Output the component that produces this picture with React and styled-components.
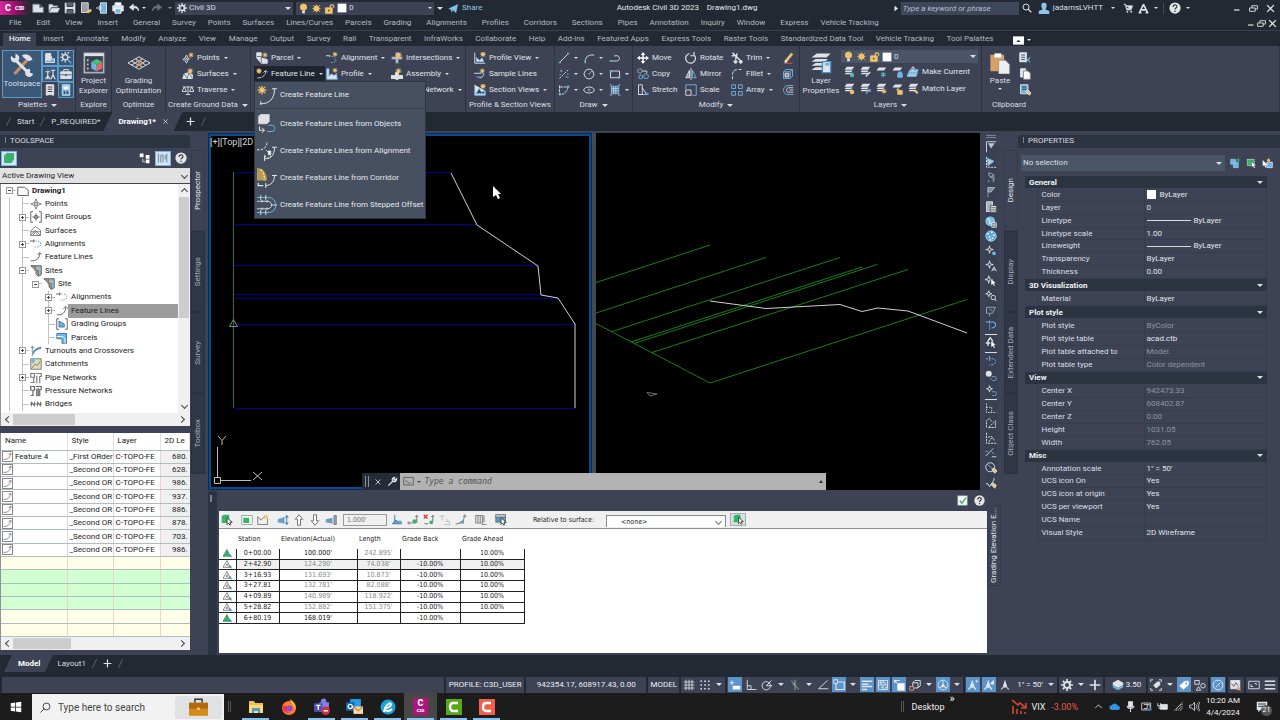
import React from 'react'
import styled, { createGlobalStyle } from 'styled-components'

const dark = '#222933'
const panel = '#3d4355'
const W = '#dfe3e8'
const B = '#6fb4e4'
const Y = '#f0c36a'
const G = '#35b56a'

const GlobalStyle = createGlobalStyle`
  * { box-sizing: border-box; }
  body {
    margin: 0;
    background: ${dark};
    color: #dcdfe6;
    font: 8px/12px Roboto, 'Open Sans', sans-serif;
  }
  button, input, select {
    font: inherit;
    color: inherit;
    border: 0;
    margin: 0;
    padding: 0;
    background: none;
    border-radius: 0;
    outline: 0;
  }
  select { appearance: none; }
  ul { list-style: none; margin: 0; padding: 0; }
  a { color: inherit; text-decoration: none; }
  table { border-collapse: collapse; }
`

/* ---------- icons ---------- */

const sun = (x = 4, y = 4, r = 2) => (
  <g stroke={Y} strokeWidth="1">
    <circle cx={x} cy={y} r={r} fill={Y} />
    <path d={`M${x} ${y - r - 2}v${r * 2 + 4}M${x - r - 2} ${y}h${r * 2 + 4}M${x - r - 1} ${y - r - 1}l${r * 2 + 2} ${r * 2 + 2}M${x + r + 1} ${y - r - 1}l-${r * 2 + 2} ${r * 2 + 2}`} />
  </g>
)
const pointer = <path d="M8 5v9l2-2 2 3 1.5-1-1.5-3h3z" fill="#fff" stroke="#333" strokeWidth=".6" />
const layerStack = (
  <path d="M5 1h10l-3 4H2zM4 6h9l-2 2H2zM4 9h9l-2 2H2z" fill={W} stroke="none" />
)

const icons = {
  newFile: <path d="M1 3h9l5 4v7H1zM10 3v4h5" fill={W} stroke="#7c828c" />,
  open: <path d="M1 13V3h5l1 2h6v2H5zM5 8h11l-3 6H1z" fill={W} stroke="#7c828c" strokeWidth=".6" />,
  save: <><path d="M1 1h14v14H1z" fill={W} stroke="none" /><path d="M4 1v5h8V1M4 15v-5h8v5" fill="#5d636d" stroke="#333" /></>,
  saveAs: <><path d="M2 1h9v13H2z" fill="#9a9fa7" stroke={W} /><path d="M7 14l7-5 2 3-5 3z" fill={Y} stroke="none" /></>,
  mobile: <><path d="M6 1h8v14H6z" fill={B} stroke={W} /><path d="M0 8h7M4 5l3 3-3 3" strokeWidth="1.6" /></>,
  print: <><path d="M4 1h8v4H4z" fill="#fff" /><path d="M1 5h14v7H1z" fill={W} /><path d="M4 9h8v6H4z" fill={B} stroke="#fff" /></>,
  undo: <path d="M7 3L2 7l5 4V8c4-1 6 1 7 4 0-5-3-7-7-6z" fill={W} />,
  redo: <path d="M9 3l5 4-5 4V8c-4-1-6 1-7 4 0-5 3-7 7-6z" fill="#68707e" stroke="#68707e" />,
  gear: <><circle cx="8" cy="8" r="4" strokeWidth="2.6" /><path d="M8 0v3M8 13v3M0 8h3M13 8h3M2.5 2.5l2 2M11.5 11.5l2 2M13.5 2.5l-2 2M4.5 11.5l-2 2" strokeWidth="2.2" /></>,
  bulb: <><circle cx="8" cy="6" r="4.6" fill={Y} stroke={Y} /><path d="M6 11h4v4H6z" fill={W} stroke="none" /></>,
  sun: sun(8, 8, 4),
  lock: <><path d="M2 7h10v8H2z" fill={Y} stroke={Y} /><path d="M9 7V4a3 3 0 015 0v3" stroke={Y} strokeWidth="1.8" /><circle cx="7" cy="11" r="1.2" fill="#333" stroke="none" /></>,
  square: <path d="M1 1h14v14H1z" fill="#fff" stroke="none" />,
  send: <path d="M0 8l15-7-3 14-5-4-2 4-1-5z" fill="#7cc2ee" stroke={dark} strokeWidth=".6" />,
  search: <><circle cx="6.5" cy="6.5" r="4.8" strokeWidth="1.6" /><path d="M10 10l5 5" strokeWidth="2" /></>,
  user: <path d="M8 1a3.5 3.5 0 013.5 4c0 2-1 4-2 4.5L15 12v4H1v-4l5.5-2.500C5 9 4.500 7 4.500 5A3.500 3.500 0 018 1z" fill="#8ec6ec" stroke="none" />,
  cart: <><path d="M1 2h3l2 9h8M4.5 4.5H15L14 9H5.5z" fill={W} /><circle cx="7" cy="14" r="1" fill={W} /><circle cx="13" cy="14" r="1" fill={W} /></>,
  adsk: <path d="M8 2L2 14M8 2l6 12M5 10h6M1 14h4M11 14h4" strokeWidth="2.2" />,
  help: <><circle cx="8" cy="8" r="7.5" fill="#e3e4e6" stroke="none" /><path d="M5.500 6.500c0-4 5.500-3.500 5 0-.3 1.500-2.500 1.500-2.500 3.500M8 11.500v1.800" stroke="#333" strokeWidth="1.6" /></>,
  min: <path d="M2 12h11" strokeWidth="2.4" />,
  restore: <path d="M1 7h10v6H1zM5 7V3h10v6h-4" strokeWidth="1.6" />,
  close: <path d="M2 2l12 12M14 2L2 14" strokeWidth="2.2" />,
  play: <path d="M5 4l5 4-5 4z" fill={W} />,
  plus: <path d="M8 1v14M1 8h14" strokeWidth="2.2" />,
  closeThin: <path d="M3 3l10 10M13 3L3 13" strokeWidth="1.6" />,
  ribbonToggle: <><path d="M0 2h20v12H0z" fill="#fff" stroke="none" /><path d="M5 10l3-3 3 3z" fill="#333" stroke="none" /></>,

  tools: <><path d="M3 14l9-10" stroke="#cf9060" strokeWidth="2" /><path d="M8 1.500c3-1.500 6 0 7 3l-2.500 1L9 3z" fill={W} stroke="none" /><path d="M3 4l10 10" strokeWidth="2" /><path d="M1 2.500a2.500 2.500 0 103-1.500L4 3.500 2.500 4zM13 11a2.300 2.300 0 102 3l-2-.5z" fill={W} stroke={W} strokeWidth=".7" /></>,
  chartPal: <><path d="M2 2v12h12V9h-4V6H8v5" fill="#8ea8c4" /><path d="M3 2h6v9H3z" fill={W} /></>,
  gearPal: <><circle cx="7" cy="7" r="3.5" strokeWidth="1.8" /><path d="M7 0v3M7 11v3M0 7h3M11 7h3M2 2l2 2M10 2l2-2M2 12l2-2" strokeWidth="1.6" /><path d="M10 10l5 5" stroke={B} strokeWidth="1.6" /></>,
  tripod: <path d="M5 5v5l-3 5M5 10l3 5M5 10v5M2 5h6M9 3h6M12 3v6l-3 6M12 9l3 6M5 2v1" strokeWidth="1.5" />,
  toolbox: <><path d="M1 5h14v9H1z" fill={W} /><path d="M5 5V2h6v3" /><path d="M1 9h14" stroke="#4c5566" /><path d="M7 8h2v3H7z" fill="#4c5566" stroke="none" /></>,
  note: <><path d="M3 1h10v14l-5-1-5 1z" fill={W} /><path d="M5 4h6M5 7h6M5 10h6" stroke="#333" /></>,
  calc: <><path d="M3 1h10v14H3z" fill={B} /><path d="M5 3h6v4H5z" fill="#fff" /><path d="M5 10h2v3H5zM9 10h2v3H9z" fill="#335" stroke="none" /></>,
  projectExplorer: <><path d="M1 1h14v14H1z" fill="#3a414d" stroke="#aab0b8" /><path d="M1 1h14v2H1z" fill={W} stroke="none" /><path d="M3 6h1M3 9h1M3 12h1" strokeWidth="1.4" /><path d="M6 7l4 2v5l-4-2z" fill={B} stroke="none" /><path d="M10 9l4-2v5l-4 2z" fill="#e06a5f" stroke="none" /><path d="M6 7l4-2 4 2-4 2z" fill="#43c07a" stroke="none" /></>,
  optimization: <><path d="M0 8l8-4.500L16 8l-8 4.500zM2.500 9.500L10.500 5M5.500 11L13 6.500M2.500 6.500L10.500 11M5.500 5L13 9.500" strokeWidth=".7" /><circle cx="8" cy="8" r="2" stroke="#d98c4f" strokeWidth=".8" /><circle cx="8" cy="8" r=".8" fill={B} stroke="none" /></>,
  points: <><path d="M6 4l2 4 2 1-2 2-2 4-2-4-3-1 3-2z" /><circle cx="6" cy="9.500" r="1.200" />{sun(12, 4, 1.5)}</>,
  surfaces: <><path d="M1 14l2-6 6-2 5 3v5z" fill={W} /><path d="M3 8l4 6 2-8 5 8" stroke="#6a717e" />{sun(11, 4, 2)}</>,
  traverse: <path d="M8 3v11M5 14h6M1 4h14M3 4L0 10h6zM13 4l-3 6h6z" />,
  parcel: <><path d="M1 1h6v7l8 2v5H7L1 8z" fill={W} /><path d="M7 5v10M1 6h7" stroke="#6a717e" />{sun(12, 4, 1.5)}</>,
  featureLine: <><path d="M2 13c6 1 11-3 11-9M10 6l3-3 3 3" strokeDasharray="5 1" />{sun(4, 4, 2)}</>,
  alignment: <><path d="M0 5h6" /><path d="M4 6h4c5 0 8 8 1 8H5" stroke={B} strokeDasharray="2 1.5" />{sun(12, 3, 1.5)}</>,
  profile: <><path d="M1 1v14h14l-1-8-3 3-4-2-3 3V1z" fill={W} stroke={B} />{sun(12, 3, 1.5)}</>,
  intersections: <><path d="M6 1h4v5h5v4h-5v5H6v-5H1V6h5z" fill="#b9bec6" stroke="#5f6673" />{sun(10, 4, 2.5)}</>,
  assembly: <><path d="M0 10h6v4H0zM10 10h6v4h-6zM6 6h4v9H6z" fill={W} />{sun(10, 4, 2)}</>,
  pipe: <><path d="M1 3h6v10H1zM9 8h6v5H9zM7 9h2" fill={W} />{sun(12, 4, 1.5)}</>,
  profileView: <><path d="M1 1v14h14" /><path d="M3 13V7l4 4 4-3 2 5z" fill={W} stroke={B} />{sun(12, 3, 2)}</>,
  sampleLines: <><path d="M0 7h10M7 13c3 1 6-2 6-6" /><path d="M3 12h8" stroke={B} />{sun(11, 4, 1.5)}</>,
  sectionViews: <><path d="M1 1v14h14V9M3 12l4-6 3 5 4-2v4H3z" fill={W} stroke={B} />{sun(12, 3, 2)}</>,
  line: <><path d="M3 13L13 3" /><path d="M1 13h3v2H1zM12 1h3v2h-3z" fill={B} stroke="none" /></>,
  arc: <><path d="M3 14C2 8 7 3 14 4" /><path d="M2 13h2v2H2zM13 3h2v2h-2zM5 5h2v2H5z" fill={B} stroke="none" /></>,
  pline: <><path d="M2 12h8c5 0 5-6 1-7H8" /><path d="M1 11h2v2H1zM7 4h2v2H7z" fill={B} stroke="none" /></>,
  divide: <><path d="M2 14L14 2" strokeDasharray="3 1.5" /><path d="M3 4h3M4.500 2.500v3M10 12h4M2 9h2M12 8h2" stroke={B} /></>,
  circle: <><circle cx="8" cy="8" r="6.500" /><path d="M8 8l4-4M7 8h2M11 4h2v2" stroke={B} /></>,
  rect: <><path d="M2 4h12v9H2z" /><path d="M1 3h3v3H1zM12 11h3v3h-3z" fill={B} stroke="none" /></>,
  spline: <><path d="M2 2v12c5 1 11-4 11-10H2" strokeDasharray="4 1" /><path d="M1 12h3v3H1zM12 2h3v3h-3z" fill={B} stroke="none" /></>,
  ellipse: <><ellipse cx="8" cy="8" rx="7" ry="4" /><path d="M8 6v4M6 8h4" stroke={B} /></>,
  hatch: <><path d="M3 3h10v10H3z" fill="#4f86ad" stroke={B} /><path d="M3 6h10M3 9h10M6 3v10M9 3v10M1 1h2v2M15 1h-2v2M1 15h2v-2M15 15h-2v-2" strokeWidth=".8" /></>,
  move: <path d="M8 0l3 4H9v3h3V5l4 3-4 3V9H9v3h2l-3 4-3-4h2V9H4v2L0 8l4-3v2h3V4H5z" fill="#fff" stroke="none" />,
  copy: <><circle cx="4" cy="4" r="3" strokeDasharray="2 1" /><circle cx="5" cy="12" r="2.600" stroke={B} /><circle cx="12" cy="11" r="3.200" stroke={B} /><path d="M8 4h5v3" /></>,
  stretch: <><path d="M2 1h5v13H2zM7 5l6 9H2" stroke={W} /><path d="M9 14h6M13 11l3 3" stroke={B} /></>,
  rotate: <path d="M6 2a6.500 6.500 0 107 3M12 0v5h-5" strokeWidth="1.6" />,
  mirror: <><path d="M6 3v10H1z" fill="#8b95a3" /><path d="M10 3v10h5z" stroke={B} /><path d="M8 0v16" /></>,
  scale: <><path d="M1 7V1h14v14H9" stroke={B} /><path d="M1 8h7v7H1z" /></>,
  trim: <><path d="M2 1l10 10M8 2L6 10M1 5h4" strokeWidth="2" /><circle cx="6" cy="13" r="2" fill={W} /><circle cx="13" cy="13" r="2" fill={W} /></>,
  fillet: <><path d="M2 15V9c0-4 3-7 7-7h6" strokeDasharray="4 2" /><path d="M2 8c0-3 2-6 6-6" stroke={B} /></>,
  array: <path d="M1 1h5v5H1zM10 1h5v5h-5zM1 10h5v5H1zM10 10h5v5h-5z" stroke={B} />,
  erase: <><path d="M2 15h12" stroke="#d95f57" /><path d="M4 11l8-10 3 2-8 10z" fill={Y} stroke="none" /><path d="M4 11l3 2-3 1z" fill="#fff" /></>,
  explode: <><path d="M2 5h9v9H2zM2 5l3-3h9v9l-3 3M11 5l3-3" stroke={B} /><path d="M4 7h5v5H4z" fill="#8b95a3" /></>,
  offset: <><path d="M15 2H8C0 2 0 14 8 14h7" stroke={B} /><path d="M15 5H9c-4 0-4 6 0 6h6M15 8h-5" /></>,
  layerProps: <><path d="M5 1h10l-3 3H1zM4 5h9l-2 2H1zM4 8h9l-2 2H1zM4 11h8l-2 2H1z" fill={W} stroke="none" /><path d="M9 7h6v8H9z" fill={W} stroke="#4a90c4" strokeWidth="1" /><path d="M11 8h3v2h-3z" fill={B} stroke="none" /></>,
  layOff: <>{layerStack}<circle cx="12" cy="12" r="3" fill="#49b9c0" stroke="none" /></>,
  layIso: <>{layerStack}<path d="M9 14l6-6" strokeWidth="1.6" /></>,
  layFrz: <><path d="M5 2h10l-3 4H2z" fill={W} stroke="none" /><path d="M11 8v7M8 10l6 3M14 10l-6 3" stroke="#49b9c0" strokeWidth="1.6" /></>,
  layLock: <><path d="M5 2h10l-3 4H2z" fill={W} stroke="none" /><path d="M9 10h6v5H9zM10 10V8h4v2" fill={B} stroke={B} /></>,
  layOn: <>{layerStack}<circle cx="12" cy="12" r="3" fill={Y} stroke="none" /></>,
  layUniso: <>{layerStack}<path d="M9 14l6-5M12 9h3v3" stroke={B} strokeWidth="1.4" /></>,
  layThaw: <>{layerStack}{sun(12, 11, 1.5)}</>,
  layUnlock: <><path d="M5 2h10l-3 4H2z" fill={W} stroke="none" /><path d="M9 10h6v5H9zM8 10V8h3" fill={Y} stroke={Y} /></>,
  makeCurrent: <><path d="M2 9h12l-2 5H0zM4 5h11l-2 4H2z" fill="#a9c7dd" stroke={B} /><path d="M8 7V1M5 4l3-3 3 3" /></>,
  matchLayer: <>{layerStack}<path d="M9 11l5 4 1-3-4-3z" fill={Y} stroke="none" /></>,
  paste: <><path d="M1 2h10v12H1z" fill="#d9a066" stroke="none" /><path d="M4 1h5v3H4z" fill="#fff" stroke="none" /><path d="M7 6h5l3 3v7H7z" fill="#eceef0" stroke="#888" strokeWidth=".5" /></>,
  cut: <><path d="M1 1h9v12H1z" fill={W} /><path d="M3 4h5M3 7h5M3 10h5" stroke="#444" /><path d="M9 7l6 7M15 7l-6 7" stroke={B} strokeWidth="1.4" /></>,
  copyClip: <><path d="M2 1h7v11H2z" fill={W} /><path d="M6 4h6l3 3v8H6z" fill="#fff" stroke="#888" /></>,
  matchProp: <><path d="M2 1h10v12H2z" fill={B} stroke={W} /><path d="M4 4h6M4 7h6" stroke="#333" /><path d="M9 10l5 5 2-3-4-4z" fill={Y} stroke={W} /></>,

  bigFeature: <><path d="M3 15c7 0 11-4 11-12M12 3h4M3 13v3" strokeWidth=".8" />{sun(4, 4, 1.5)}</>,
  bigObjects: <><path d="M1 2l2-2h7v6l-2 2H1z" fill={W} stroke="#aaa" strokeWidth=".5" /><path d="M2 10v3h4M4 11l2 2-2 2" strokeWidth=".8" /><path d="M8 14h4c3 0 3-5 0-5H9" stroke={B} strokeWidth=".8" /></>,
  bigAlign: <><path d="M0 7h3c5-1 5-6 5-6M6 11c2 4 4 3 5 1" strokeDasharray="2 1" strokeWidth=".8" /><path d="M7 7l3 3M9 8h2v3H9z" fill="#fff" strokeWidth=".6" /><path d="M6 14c5 1 8-3 8-9M12 5h4M6 12v4" strokeWidth=".8" /></>,
  bigCorridor: <><path d="M0 0c5 0 8 4 8 10H0z" fill="#b59a5e" stroke="none" /><path d="M3 1c2 2 3 5 3 9" stroke="#f7e36b" strokeDasharray="2 1" /><path d="M1 12v2h4" strokeWidth="1" /><path d="M7 14c4 0 7-3 7-8M12 6h4M7 12v4" strokeWidth=".8" /></>,
  bigStepped: <><path d="M0 2h9c8 0 8 12 0 12H0" stroke={B} strokeWidth=".8" /><path d="M0 5h8c5 0 5 6 0 6H0M3 0v4M7 0v4M3 12v4M7 12v4M4 4v2M8 4v2M4 10v2M8 10v2M11 8h5" strokeWidth=".7" /></>,

  cubeGreen: <path d="M2 5l3-3h9v8l-3 4H2z" fill={G} stroke="#2b8a52" strokeWidth=".8" />,
  panorama: <><path d="M1 2h5v5H1zM9 4h5v5H9zM9 10h5v5H9z" fill="#fff" stroke="none" /><path d="M5 9v4h3" /></>,
  previewOn: <path d="M2 2v12M5 4v10M8 4v10M11 4v6M13 2v12M5 4h4" stroke="#8792a0" strokeWidth="1.6" />,
  page: <path d="M1 3h9l5 4v7H1z" stroke="#555" fill="#fff" />,
  tPoint: <><path d="M8 1l2 5 5 2-5 2-2 5-2-5-5-2 5-2z" stroke="#777" /><circle cx="8" cy="8" r="2" stroke="#666" /></>,
  tGroup: <><path d="M4 1H1v14h3M12 1h3v14h-3" stroke="#555" /><path d="M8 3v10M3 8h10" stroke="#777" /><circle cx="8" cy="8" r="2.500" stroke="#555" /></>,
  tSurface: <path d="M1 14V8l6-6 7 5v7zM1 14l6-7 7 7M1 9h13M4 14l3-4 4 4" stroke="#777" />,
  tAlign: <><path d="M0 4h6M5 2v4" stroke="#555" /><path d="M7 4h2c7 0 7 8 0 8H6" stroke={B} strokeDasharray="2 1.5" strokeWidth="1.5" /></>,
  tFeature: <path d="M1 13c7 1 12-3 12-10M10 5l3-3 3 3" stroke="#555" />,
  tSite: <><path d="M1 1h14v12l-4 2-3-3V7z" fill="#9ab9cf" stroke="#555" /><path d="M3 1h4v6l4 1v7" fill="none" stroke="#8a7a5a" strokeWidth="2" /></>,
  tGrading: <><path d="M4 1H1v14h3M12 1h3v14h-3" stroke="#555" /><path d="M4 4l7 4v4H4z" fill={B} stroke="#2f78a8" /></>,
  tParcel: <><path d="M1 2h13v13H8V9H1z" fill={B} stroke="#2f78a8" /><path d="M1 6h8l3 3v6" stroke="#fff" /></>,
  tTurnout: <><path d="M3 15C3 8 7 4 15 3M3 1v8M1 3h5" stroke="#777" /><path d="M4 12C5 7 9 5 15 4" stroke="#3c8fd0" strokeWidth="2" /></>,
  tCatch: <><path d="M1 1h14v14H1z" fill="#cfe3c0" stroke="#777" /><path d="M2 14l5-6 3 2 4-6" stroke="#d2553d" /><circle cx="4" cy="4" r="2.500" fill={B} stroke="none" /></>,
  tPipe: <path d="M1 2h5v5H1zM5 7v7H1M8 2h7v4h-2v9M9 5v10M1 14h5" stroke="#777" strokeWidth="1.5" />,
  tPressure: <path d="M1 2h5v5H1zM4 7v7H1M8 2h7v4h-2v9M9 5v10M11 4v11" stroke="#666" strokeWidth="1.6" />,
  tBridge: <path d="M0 8h16M2 5v6M6 5v6M10 5v6M14 5v6M2 5l4 6M10 5l4 6" stroke="#666" />,

  addSel: <><path d="M1 2h7v7H1zM5 6h7v8H5z" fill={B} stroke="#8cc4ea" /><path d="M12 0v6M9 3h6" stroke={G} strokeWidth="1.6" /></>,
  quickSel: <><path d="M2 2h10v9H2z" fill={G} stroke={W} strokeDasharray="2 1" />{pointer}</>,
  selObj: <><path d="M7 6h8v8H7z" fill={B} stroke={W} /><path d="M7 3l3-3 2 4-3 2z" fill={Y} stroke="none" /><path d="M1 3v9l2-2 2 4 1-1-1-3h3z" fill="#fff" stroke="none" /></>,

  eSelect: <><path d="M1 3l3-2h7v8l-2 3H1z" fill={G} stroke="none" /><path d="M8 5v9l2-2 2 3 1-1-1-3h3z" fill="#fff" stroke="#333" /></>,
  eZoom: <><path d="M1 2h14v12H1z" fill="#fff" stroke="#8a9" /><path d="M3 5h8v7H3z" fill={G} stroke="none" /></>,
  eQuick: <><path d="M1 3v11h13V6M1 4l4 4 6-5" stroke="#777" />{sun(12, 4, 1.5)}</>,
  eRaise: <><path d="M1 7l9-3v9l-9-2z" fill="#6ba0c6" stroke="none" /><path d="M13 2v12M11 5l2-3 2 3M11 11l2 3 2-3" stroke="#2d78b0" /></>,
  eUp: <path d="M8 1l5 6h-3v8H6V7H3z" stroke="#666" fill="#fff" />,
  eDown: <path d="M8 15l5-6h-3V1H6v8H3z" stroke="#666" fill="#fff" />,
  eSet: <><path d="M1 7l9-2v8l-9-2z" fill="#6ba0c6" stroke="none" /><path d="M12 2h3v12h-3z" fill="#9aa" stroke="#777" /></>,
  eFlat: <><path d="M5 1v8M2 13l4-5 8 5z" fill="#6ba0c6" stroke="#2d78b0" /><circle cx="12" cy="11" r="2.500" fill="#5f9fd0" stroke="none" /></>,
  eIns: <><path d="M1 12h6M3 10l-2 2 2 2M13 2v10M11 4l2-2 2 2" stroke="#666" /><circle cx="10" cy="10" r="3" fill={G} stroke="none" /></>,
  eDel: <><path d="M1 1l5 5M6 1L1 6" stroke="#d33" strokeWidth="1.8" /><path d="M2 13h5M13 2v8M11 4l2-2 2 2" stroke="#666" /><circle cx="11" cy="11" r="2.500" fill={G} stroke="none" /></>,
  eGray: <path d="M1 3h6M4 1v8M9 6l5 5M7 14h8M8 10h6v4" stroke="#c0c0c0" />,
  eCopy: <><path d="M1 13c6 1 10-3 12-10" stroke="#666" /><path d="M4 12l8-5v6z" fill="#6ba0c6" stroke="none" /><path d="M11 4l2-3 2 3" stroke="#666" /></>,
  eCols: <path d="M1 2h9v10H1zM4 2v10M7 2v10M12 2v9M9 14h6" stroke="#888" strokeWidth="1.5" />,
  eRows: <><path d="M1 1h13v10H1z" fill="#4e9bd0" stroke="#777" /><path d="M1 1h13v3H1z" fill="#ddd" stroke="#777" /><path d="M8 5v9l2-2 2 3 1-1-1-3h3z" fill="#fff" stroke="#333" /></>,
  triOn: <><path d="M0 13L7 1l6 12z" fill={G} stroke="#2b8a52" /><path d="M10 12h5M12 9l3 6" stroke="#2d88cc" strokeWidth="1.6" /></>,
  triOff: <><path d="M0 13L7 1l6 12z" fill="#fff" stroke="#555" /><path d="M7 6v5M5 9h4" stroke="#555" /><path d="M10 12h5M12 9l3 6" stroke="#2d88cc" strokeWidth="1.6" /></>,
  check: <><path d="M1 1h14v14H1z" fill="#fff" stroke="#888" /><path d="M4 8l3 4 6-8" stroke={G} strokeWidth="2" /></>,
  wrench: <path d="M2 14l7-7M14 4l-3 2-1-1 1-3c-3 0-4 3-3 5l1 1c3 1 5-1 5-4z" strokeWidth="1.8" />,
  cmd: <><path d="M1 2h14v11H1z" stroke="#555" /><path d="M4 6l2 2-2 2M7 10h4" stroke="#555" /></>,

  v1: <><path d="M2 1h13M2 1v14" /><path d="M4 3h9l-5 7z" fill="#b7c9d8" stroke="none" /></>,
  v2: <><path d="M2 1v14h13" strokeDasharray="3 1" /><path d="M3 3l9 4-8 6z" fill="#b7c9d8" stroke={B} /></>,
  v3: <path d="M5 2l5 2v4l-5-2zM6 8l5 2v5M12 4v9M5 12v3" stroke="#9aa8b8" />,
  v4: <><path d="M4 1v14" stroke="#8fa4b4" /><path d="M4 2h9l-5 6H4z" fill="#7d8b9d" stroke="#a9b6c4" /></>,
  v5: <><path d="M2 1h8v13H2z" fill="#aab3be" /><path d="M7 6h8v9H7z" fill={W} stroke="#555" /><path d="M8 9h6M8 12h6" stroke="#555" /></>,
  v6: <><circle cx="7" cy="7" r="6.500" fill="#7fc0e6" stroke="none" /><path d="M2 5c3-3 5 0 4 3s3 2 5 0" stroke="#fff" /><path d="M9 9h6v6H9zM12 9v6M9 12h6" fill={panel} /></>,
  v7: <><circle cx="8" cy="8" r="7" fill="#5fa8d8" stroke="#9cd" /><path d="M3 5h2M8 3h2M11 7h2M5 9h2M9 11h2M6 13h2" stroke="#fff" strokeWidth="1.8" /></>,
  v8: <><path d="M6 1l1 4 4 1-4 1-1 4-1-4-4-1 4-1z" /><circle cx="12" cy="11" r="2.500" fill={B} stroke="none" /></>,
  v9: <><path d="M6 1l1 4 4 1-4 1-1 4-1-4-4-1 4-1z" /><path d="M9 15l3-6 3 6M10 13h4" /></>,
  v10: <><path d="M5 1l1 4 4 1-4 1-1 4-1-4-4-1 4-1z" />{pointer}</>,
  v11: <><path d="M5 1l1 3 3 1-3 1-1 3-1-3-3-1 3-1z" /><circle cx="11" cy="10" r="3" /><path d="M13 12l2 3" /></>,
  v12: <path d="M2 3h12l-4 8H6v4M2 3v8h3M6 5l4 3" stroke="#9aa8b8" />,
  v13: <><path d="M1 4h9c6 0 5 8-1 8" stroke={B} strokeWidth="1.5" /><path d="M6 2v13" stroke={B} strokeDasharray="2 1" /></>,
  v14: <><path d="M4 12V5l3-4 3 4v3M1 8h6" strokeWidth="1.8" />{pointer}</>,
  v15: <path d="M1 5h9c6 0 5 8-1 8H6M6 1v8" stroke={B} strokeDasharray="3 1" />,
  v16: <><circle cx="5" cy="5" r="4" fill={W} stroke="none" /><path d="M7 12h2M9 9h4c3 0 3 5 0 5h-3" stroke={B} /></>,
  v17: <><path d="M6 1l1 3 3 1-3 1-1 3-1-3-3-1 3-1z" /><path d="M9 9h4c3 0 3 5 0 5h-3" stroke={B} /></>,
  v18: <path d="M2 2v12h13M2 7h7v7" strokeDasharray="2 1.5" />,
  v19: <path d="M2 14V5l4-3 3 4M5 14l9-9v9z" strokeDasharray="3 1" />,
  v20: <path d="M2 1v14h13M4 7l5-1 4 6M5 13l5-6" strokeDasharray="3 1" />,
  v21: <><path d="M1 12L11 2M9 13h6" /><path d="M1 6h3M9 8h3" stroke={B} /></>,
  v22: <><circle cx="7" cy="7" r="6" /><path d="M3 3l7 6" stroke={B} /><path d="M9 10l4 5 3-3-4-4z" fill={Y} /></>,
  v23: <><path d="M1 9h3l2 4 6-9M12 1v3" /><path d="M8 10l5 5 2-4-4-3z" fill={Y} /></>,

  sGrid: <path d="M4 1v14M8 1v14M12 1v14M1 4h14M1 8h14M1 12h14" strokeWidth="1.1" />,
  sDots: <path d="M2 3h2M7 3h2M12 3h2M2 8h2M7 8h2M12 8h2M2 13h2M7 13h2M12 13h2" strokeWidth="2" />,
  sInfer: <><path d="M1 5h6M4 2v6" strokeWidth="1.6" /><path d="M5 9h10v5H5z" fill="#fff" stroke="none" /></>,
  sOrtho: <path d="M3 1v13h12M3 9h5v5" />,
  sPolar: <><circle cx="7" cy="9" r="5.500" /><path d="M7 9l7-7M7 9h8" /></>,
  sIso: <path d="M8 1v14M3 2l10 12M5 8l3-2" stroke="#9fb59f" />,
  sAngle: <path d="M14 2L2 13h13" />,
  sSnap: <><path d="M4 4h11v10H4z" strokeWidth="1.5" /><path d="M1 1h5v5H1z" fill="#5b93cb" /></>,
  sLwt: <path d="M1 3h14M1 7h9M1 10h14M1 14h7" strokeWidth="2" />,
  sTransp: <path d="M2 2h12v12H2zM2 5h3v3H2M8 5h3v3H8M5 8h3v3H5M11 8h3v3h-3M5 2v3h3V2M8 11v3M11 11v3" />,
  sCycle: <><path d="M6 6h9v9H6z" fill="#fff" /><path d="M2 5V2h7M2 2l3 3" strokeWidth="1.6" /></>,
  s3d: <><path d="M5 5h7v7H5zM5 5l3-3h7v7l-3 3" /><path d="M1 10h5v5H1z" stroke="#d98" fill={panel} /></>,
  sUcs: <><circle cx="8" cy="8" r="6.500" /><path d="M8 2v7M8 9l-5 3M8 9l5 3" strokeWidth="1.4" /><circle cx="8" cy="9" r="1.500" fill="#fff" /></>,
  sAnno: <><path d="M7 2v7M7 8l-5 6M7 8l5 6M7 4l-2 5 2 2 2-2z" fill="#fff" strokeWidth="1.8" /><path d="M11 3h4M13 1v4" /></>,
  sAnno2: <><path d="M7 2v7M7 8l-5 6M7 8l5 6M7 4l-2 5 2 2 2-2z" fill="#fff" strokeWidth="1.8" /><path d="M10 6l4-4v5z" fill="#fff" /></>,
  sAnno3: <path d="M8 2v7M8 8l-5 6M8 8l5 6M8 4L6 9l2 2 2-2z" fill={W} strokeWidth="1.5" />,
  sStack: <><path d="M8 1l7 4v3l-7 4-7-4V5z" fill={W} stroke="none" /><path d="M1 8l7 4 7-4v3l-7 4-7-4z" fill={B} stroke="none" /></>,
  sTagSel: <><path d="M1 4V1h3M12 1h3v3M15 12v3h-3M4 15H1v-3" /><path d="M5 8l5-4 3 0v4l-5 4z" fill={W} /></>,
  sTag: <><path d="M2 9l7-6h5v5l-7 6z" fill="#fff" /><circle cx="11" cy="6" r="1.200" fill="#5b93cb" stroke="none" /></>,
  sShapes: <><path d="M1 2h6v5H1zM3 15l3-5 3 5z" /><circle cx="12" cy="9" r="3" /></>,
  sClean: <><circle cx="8" cy="8" r="6.500" strokeWidth="1.3" /><path d="M5 11l6-6" strokeWidth="1.3" /></>,
  sGraph: <><path d="M1 2h12v11H1z" fill={W} /><path d="M2 6l3 4 3-5 3 4" stroke="#555" /><path d="M10 9l5 6h-6z" fill="#e0a070" stroke="none" /></>,
  sFull: <path d="M1 3h14v10H1zM4 10h3M11 6h-2M4 7v3M11 6v2" />,
  burger: <path d="M1 3h14M1 8h14M1 13h14" strokeWidth="2" />,

  start: <path d="M1 3l6-1v5.500H1zM8 2l7-1v6.500H8zM1 8.500h6V14l-6-1zM8 8.500h7V15l-7-1z" fill="#fff" stroke="none" />,
  searchWin: <><circle cx="10" cy="6" r="4.600" stroke="#333" /><path d="M7 9l-5 5" stroke="#333" /></>,
  briefcase: <><path d="M5 4V1h6v3" stroke="#333" /><path d="M0 4h16v11H0z" fill="#d58a1c" stroke="none" /><path d="M0 4h16v5H0z" fill="#b06a10" stroke="none" /><path d="M7 8h2v2H7z" fill="#fbe08a" stroke="none" /></>,
  folder: <><path d="M1 2h5l1 2h8v10H1z" fill="#f2c14d" stroke="none" /><path d="M1 6h14v8H1z" fill="#fbd975" stroke="none" /><path d="M4 9h8v5h-2v-2H6v2H4z" fill="#4f9bd6" stroke="none" /></>,
  firefox: <><circle cx="8" cy="9" r="7" fill="#ff7a2b" stroke="none" /><path d="M9 0c4 3 7 6 5 11 0-5-4-5-5-11z" fill="#ffbd3a" stroke="none" /><path d="M1 6c0 6 4 9 9 8-6 0-5-5-2-6z" fill="#e8345a" stroke="none" /><circle cx="8.500" cy="9.500" r="3" fill="#8b4bd8" stroke="none" /></>,
  teams: <><path d="M6 4h9v9H6z" fill="#7b83eb" stroke="none" /><circle cx="10" cy="3" r="2.500" fill="#7b83eb" stroke="none" /><path d="M1 5h8v8H1z" fill="#4b53bc" stroke="none" /><path d="M3 7h4M5 7v4" stroke="#fff" /><circle cx="12" cy="12" r="4" fill="#d22f3c" stroke="none" /><path d="M10 12h4" stroke="#fff" strokeWidth="1.4" /></>,
  outlook: <><path d="M4 1h10v10H4z" fill="#2a9be8" stroke="none" /><path d="M0 4h8v8H0z" fill="#0f64b4" stroke="none" /><circle cx="4" cy="8" r="2" stroke="#fff" /><path d="M7 8h9v7H7z" fill="#f8d9a4" stroke="none" /><path d="M7 8l4.500 4L16 8" stroke="#c78b3a" /></>,
  eApp: <><circle cx="8" cy="8" r="7.500" fill="#1aa3d8" stroke="none" /><path d="M4 13C5 5 12 2 11 6c-.5 2-4 3-5 3M5 11c3 2 5 1 7-1" stroke="#fff" strokeWidth="1.8" /></>,
  camG: <><path d="M0 0h16v16H0z" fill="#57a917" stroke="none" /><path d="M12 4H7C3 4 3 12 7 12h5" stroke="#fff" strokeWidth="2.4" /></>,
  camR: <><path d="M0 0h16v16H0z" fill="#f0604c" stroke="none" /><path d="M12 4H7C3 4 3 12 7 12h5" stroke="#fff" strokeWidth="2.4" /></>,
  vix: <path d="M1 1l6 5 2-2 6 5M15 4v5h-5M2 15V7M6 15v-5M10 15v-3M14 15v-2" stroke="#c8452f" strokeWidth="1.7" />,
  up: <path d="M2 11l6-6 6 6" strokeWidth="1.5" />,
  cloud: <path d="M4 13a3.500 3.500 0 010-7 5 5 0 019 1 3 3 0 010 6z" fill="#2f93e0" stroke="none" />,
  mic: <><path d="M5 1h6v8H5z" fill={W} /><path d="M3 7c0 5 10 5 10 0M8 12v4" strokeWidth="1.5" /></>,
  cam: <><path d="M1 3h13v10H1z" /><path d="M4 5h5v6H4M9 5h3v3" /><circle cx="13" cy="12" r="2.500" fill="#2f7ad0" stroke="none" /></>,
  battery: <><path d="M5 5h10v7H5z" fill={W} /><path d="M1 3v4h4V3M3 7v4h3" /></>,
  wifi: <path d="M2 14L14 2M5 14c0-4 4-9 9-9M8 14c0-3 3-6 6-6M11 14c0-2 1-3 3-3" stroke="#b9bcc0" />,
  sound: <path d="M1 6h3l4-4v12l-4-4H1zM10 5c2 2 2 4 0 6M12 3c3 3 3 7 0 10M14 1c4 5 4 9 0 14" />,
  notify: <><path d="M1 1h14v11H6l-3 3v-3H1z" fill={W} stroke="none" /><path d="M3 4h10M3 7h10" stroke="#222" /></>,
}

const Svg = styled.svg`
  width: ${p => p.$s}px;
  height: ${p => p.$s}px;
  flex: none;
  display: block;
`

function Icon({ n, s = 12 }) {
  return (
    <Svg viewBox="0 0 16 16" $s={s} aria-hidden="true" fill="none" stroke={W} strokeWidth="1.2">
      {icons[n]}
    </Svg>
  )
}

const Caret = styled.i`
  flex: none;
  border: solid transparent;
  border-width: ${p => (p.$big ? '3px 3px 0' : '2px 2px 0')};
  border-top-color: ${p => p.$color || '#dcdfe6'};
`

/* ---------- layout ---------- */

const Page = styled.div`
  min-height: 100vh;
  display: flex;
  flex-direction: column;
  overflow: hidden;
`

const Row = styled.div`
  display: flex;
  align-items: center;
  gap: ${p => p.$gap || 0}px;
`

const Spacer = styled.span`
  flex: 1;
`

const IconButton = styled.button`
  display: flex;
  align-items: center;
  justify-content: center;
  flex: none;
  width: 16px;
  height: 15px;
`

/* ---------- title bar ---------- */

const TitleBar = styled.header`
  height: 16px;
  display: flex;
  align-items: center;
`

const Logo = styled.div`
  display: flex;
  align-items: center;
  gap: 4px;
  width: 30px;
  height: 14px;
  padding-left: 5px;
  background: linear-gradient(90deg, #d6289c 0, #a80f72 45%, #4a1c48 85%, ${dark});
  color: #fff;
  font-size: 9px;
  font-weight: 900;

  small {
    font-size: 5px;
  }
`

const Combo = styled.label`
  display: flex;
  align-items: center;
  gap: 2px;
  flex: none;
  width: ${p => p.$w}px;
  height: 13px;
  padding: 0 2px;
  background: ${p => p.$bg || panel};

  select {
    flex: 1;
    min-width: 0;
  }
`

const Title = styled.h1`
  flex: 1;
  margin: 0;
  font-size: 8px;
  font-weight: 400;
  color: #e4e6ea;
  text-align: center;
  white-space: pre;
`

const SearchBox = styled.input`
  width: 118px;
  height: 13px;
  padding: 0 2px;
  background: #3e4759;
  font-style: italic;

  &::placeholder {
    color: #b9bec8;
    opacity: 1;
  }
`

const Share = styled.a`
  display: flex;
  align-items: center;
  gap: 3px;
  color: #8ccbf2 !important;
  margin-left: 5px;
`

const Separator = styled.i`
  width: 1px;
  height: 11px;
  background: #454c59;
`

const WindowButtons = styled.div`
  display: flex;
  align-items: center;
  gap: 8px;
  padding: 0 5px 0 43px;
`

/* ---------- menus ---------- */

const MenuBar = styled.nav`
  height: 15px;
  display: flex;
  align-items: center;
  padding-left: 9px;
  border-bottom: 1px solid #39414e;
  color: #b4b9c2;

  a {
    margin-right: 15px;
  }

  a.tight {
    margin-right: 12px;
  }
`

const MdiButtons = styled.div`
  display: flex;
  gap: 2px;
  margin-left: auto;
  padding-right: 3px;
`

const RibbonTabs = styled.nav`
  height: 15px;
  display: flex;
  align-items: flex-end;
  justify-content: space-between;
  padding: 0 249px 0 3px;
  color: #b4b9c2;
`

const RibbonTab = styled.a`
  height: 13px;
  padding: 0 6px;
  background: ${p => (p.$active ? panel : 'none')};

  ${p => p.$active && 'color: #f0f1f4 !important; font-weight: 500;'}
`

const RibbonToggle = styled.button`
  display: flex;
  align-items: center;
  gap: 3px;
  height: 12px;
  padding-left: 13px;
`

const Ribbon = styled.div`
  height: 66px;
  display: flex;
  background: ${panel};
`

const RibbonPanel = styled.section`
  flex: ${p => (p.$last ? 1 : 'none')};
  width: ${p => p.$w}px;
  display: flex;
  flex-direction: column;
  border-right: 1px solid #2b3240;
`

const PanelBody = styled.div`
  flex: 1;
  display: flex;
  padding: 4px ${p => p.$pad || 0}px 0;
`

const PanelTitle = styled.div`
  height: 14px;
  width: ${p => (p.$w ? p.$w + 'px' : 'auto')};
  display: flex;
  justify-content: center;
  align-items: center;
  gap: 4px;
  white-space: nowrap;
`

const Column = styled.div`
  width: ${p => p.$w}px;
  flex: none;
`

const RibbonButton = styled.button`
  display: flex;
  align-items: center;
  gap: 3px;
  height: 16px;
  padding: 0 2px;
  white-space: nowrap;
  color: #e2e4e9;
  background: ${p => (p.$open ? '#1f252f' : 'none')};

  i {
    margin-left: 1px;
  }
`

const BigButton = styled.button`
  display: flex;
  flex-direction: column;
  align-items: center;
  flex: none;
  width: ${p => p.$w}px;
  height: 48px;
  padding-top: 2px;
  line-height: 10px;
  gap: 2px;
  background: ${p => (p.$on ? '#3b5876' : 'none')};
  border: ${p => (p.$on ? '1px solid #5a9bcb' : '0')};
`

const PaletteGrid = styled.div`
  display: grid;
  grid-template-columns: 16px 16px;
  grid-auto-rows: 16px;
`

const PaletteButton = styled.button`
  display: flex;
  align-items: center;
  justify-content: center;
  background: ${p => (p.$on ? '#3b5876' : 'none')};
  border: ${p => (p.$on ? '1px solid #5a9bcb' : '0')};
`

const LayerRow = styled.div`
  display: flex;
  padding-top: 1px;
`

const MenuAnchor = styled.div`
  position: relative;
`

const DropMenu = styled.ul`
  position: absolute;
  z-index: 10;
  top: 15px;
  left: 0;
  width: 172px;
  background: #475060;
  border: 1px solid #2d3441;

  li:first-child {
    border-bottom: 1px solid #3a4250;
    margin-bottom: 1px;
  }

  button {
    display: flex;
    align-items: center;
    gap: 3px;
    width: 100%;
    height: 26px;
    padding-left: 2px;
    color: #e6e8ec;
    white-space: nowrap;
  }

  li + li button {
    height: 27px;
  }
`

const Tabs = styled.nav`
  height: ${p => p.$h}px;
  display: flex;
  align-items: center;
  gap: 8px;
  padding: 0 8px;
  padding-bottom: ${p => p.$below || 0}px;
  color: #d8dbe1;
`

const Slash = styled.i`
  width: 1px;
  height: 9px;
  background: #59616e;
  transform: skewX(-25deg);
`

const SlantTab = styled.a`
  position: relative;
  z-index: 0;
  display: flex;
  align-items: center;
  gap: 6px;
  height: ${p => p.$h}px;
  padding: 0 9px 0 10px;
  color: #fff !important;
  font-weight: 700;

  &::before {
    content: '';
    position: absolute;
    z-index: -1;
    inset: 0;
    background: ${panel};
    transform: skewX(-25deg);
  }
`

/* ---------- workspace ---------- */

const Workspace = styled.main`
  flex: 1;
  display: flex;
  padding-top: 2px;
  background: ${panel};
`

const Toolspace = styled.aside`
  width: 208px;
  flex: none;
  display: flex;
`

const Gutter = styled.div`
  width: 3px;
`

const Properties = styled.aside`
  width: 277px;
  flex: none;
  display: flex;
`

const SideBody = styled.div`
  flex: 1;
  min-width: 0;
  padding-top: 2px;
`

const SideTitle = styled.h2`
  margin: 0;
  height: 13px;
  padding-left: 5px;
  background: #2d3441;
  font-size: 8px;
  line-height: 11px;
  font-weight: 400;
  color: #d8dbe1;

  &::before {
    content: '';
    display: inline-block;
    width: 1px;
    height: 6px;
    margin-right: 4px;
    background: #7a8290;
  }
`

const SideTabs = styled.div`
  width: 15px;
  flex: none;
  padding: 17px 0 0 1px;
`

const SideTab = styled.button`
  display: flex;
  align-items: center;
  justify-content: center;
  width: 14px;
  height: 81px;
  background: ${p => (p.$active ? panel : '#2f3645')};
  border: 1px solid ${p => (p.$active ? '#343b4a' : '#293040')};
  color: ${p => (p.$active ? '#e2e4e9' : '#a9afba')};

  span {
    writing-mode: vertical-rl;
    transform: rotate(180deg);
    white-space: nowrap;
  }
`

const ToolspaceTools = styled.div`
  height: 20px;
  display: flex;
  align-items: center;
  gap: 2px;
  padding: 0 1px;
`

const LightButton = styled(IconButton)`
  background: ${p => (p.$on ? '#cfe6f7' : 'none')};
  border: 1px solid ${p => (p.$on ? '#7db6dd' : 'transparent')};
`

const ViewSelect = styled.label`
  display: flex;
  align-items: center;
  height: 15px;
  padding: 0 3px 0 2px;
  background: #e2e2e2;
  color: #222;

  select {
    flex: 1;
  }
`

const Chevron = styled.i`
  flex: none;
  width: 5px;
  height: 5px;
  border: solid ${p => p.$color || '#444'};
  border-width: 0 1px 1px 0;
  transform: rotate(${p => p.$deg ?? 45}deg);
`

const WhiteBox = styled.div`
  margin-top: ${p => p.$top}px;
  background: #fff;
  color: #1a1a1a;
  border-left: 1px solid #8d929b;
  overflow: hidden;
`

const TreeWrap = styled.div`
  display: flex;
  height: 229px;
`

const Tree = styled.ul`
  flex: 1;
  height: 227px;
  display: grid;
  grid-auto-rows: 1fr;
`

const TreeRow = styled.li`
  display: flex;
  align-items: stretch;
  padding-left: 2px;
`

const TreeCell = styled.span`
  width: 13px;
  flex: none;
  display: flex;
  align-items: center;
  justify-content: center;
  background: linear-gradient(#c0c0c0, #c0c0c0) 6px 0 / ${p => (p.$line ? 1 : 0)}px 100% no-repeat,
    linear-gradient(#c0c0c0, #c0c0c0) 6px 6px / ${p => (p.$tick ? 7 : 0)}px 1px no-repeat;
`

const Expander = styled.span`
  width: 7px;
  height: 7px;
  border: 1px solid #999;
  background: linear-gradient(#444, #444) 1px 2px / 3px 1px no-repeat,
    linear-gradient(#444, #444) 2px 1px / 1px ${p => (p.$open ? 0 : 3)}px no-repeat,
    #fff;
`

const TreeLabel = styled.span`
  flex: 1;
  display: flex;
  align-items: center;
  padding-left: 3px;
  white-space: nowrap;
  font-weight: ${p => (p.$bold ? 700 : 400)};
  background: ${p => (p.$selected ? '#9c9c9c' : 'none')};
`

const VScroll = styled.div`
  width: 12px;
  flex: none;
  display: flex;
  flex-direction: column;
  align-items: center;
  justify-content: space-between;
  padding: 5px 0;
  background: linear-gradient(#cdcdcd, #cdcdcd) 1px 13px / 10px 121px no-repeat, #f0f0f0;
`

const HScroll = styled.div`
  height: 13px;
  display: flex;
  align-items: center;
  justify-content: space-between;
  padding: 0 6px 0 5px;
  background: linear-gradient(#cdcdcd, #cdcdcd) 12px 1px / ${p => p.$thumb}px 11px no-repeat, #f0f0f0;
`

const ItemTable = styled.table`
  width: 100%;
  height: 204px;
  table-layout: fixed;

  th, td {
    height: 13px;
    padding: 0 2px;
    line-height: 10px;
    text-align: left;
    font-weight: 400;
    white-space: nowrap;
    overflow: hidden;
    border-right: 1px solid #efcfcf;
    border-bottom: 1px solid #aebdc3;
  }

  th {
    height: 17px;
    padding: 0 0 0 4px;
    border-right-color: #e2e2e2;
  }

  td:last-child {
    text-align: right;
    border-right: 0;
  }
`

const ItemRow = styled.tr`
  background: ${p => p.$bg || '#fff'};

  td:last-child {
    background: ${p => p.$bg || '#f0f0f0'};
  }
`

const NameCell = styled.div`
  display: flex;
  align-items: center;
  gap: 2px;
  height: 12px;
  margin-left: -1px;
`

const FeatureIcon = styled.span`
  display: flex;
  width: 11px;
  height: 11px;
  border: 1px solid #888;
`

/* ---------- drawing ---------- */

const Center = styled.div`
  flex: 1;
  min-width: 0;
  display: flex;
  flex-direction: column;
`

const DrawRow = styled.div`
  flex: 1;
  display: flex;
`

const DrawArea = styled.div`
  position: relative;
  flex: 1;
  display: flex;
  background: #000;
`

const Viewport = styled.div`
  flex: 1;
  min-width: 0;
  display: flex;
  background: #000;
  box-shadow: ${p => (p.$active ? 'inset 0 0 0 1px #072c58, inset 0 0 0 3px #0b4a8c' : 'none')};

  svg {
    width: 100%;
    min-height: 0;
  }
`

const ViewDivider = styled.div`
  width: 4px;
  background: #45484c;
`

const ViewLabel = styled.div`
  position: absolute;
  top: 3px;
  left: 2px;
  color: #d8d8d8;
  font-size: 9px;
`

const Cursor = styled.svg`
  position: absolute;
  left: 284px;
  top: 53px;
  width: 9px;
  height: 14px;
`

const CommandBar = styled.div`
  position: absolute;
  left: 20%;
  bottom: 0;
  width: 60%;
  height: 17px;
  display: flex;
  font: italic 8px/12px 'DejaVu Sans Mono', monospace;
`

const CommandTools = styled.div`
  width: 38px;
  display: flex;
  align-items: center;
  justify-content: space-around;
  background: #262c37;
`

const GripV = styled.i`
  width: 4px;
  height: 11px;
  border: solid #8a919e;
  border-width: 0 1px;
`

const CommandInput = styled.label`
  flex: 1;
  display: flex;
  align-items: center;
  gap: 3px;
  padding: 0 3px;
  background: #b2b2b2;

  input {
    flex: 1;
    min-width: 0;
  }

  input::placeholder {
    color: #555;
    opacity: 1;
  }
`

const CaretUp = styled.i`
  border: solid transparent;
  border-width: 0 2px 3px;
  border-bottom-color: #333;
`

const ToolStrip = styled.div`
  width: 23px;
  flex: none;
  display: flex;
  flex-direction: column;
  padding: 2px 6px 0 5px;

  hr {
    width: 12px;
    height: 1px;
    margin: 1px auto;
    border: 0;
    background: #d8dbe1;
  }

  button {
    display: flex;
    flex: 1;
    align-items: center;
    justify-content: center;
    background: #394053;
  }
`

const Grip = styled.i`
  width: 10px;
  height: 3px;
  margin: 0 1px 2px;
  border: solid #7a8290;
  border-width: 1px 0;
`

/* ---------- elevation editor ---------- */

const Editor = styled.section`
  height: 165px;
  flex: none;
  display: flex;
`

const EditorGrip = styled.div`
  width: 9px;
  margin: 1px 2px 0 0;
  background: #2d3441;
  padding: 4px 2px;

  i {
    display: block;
    width: 2px;
    height: 7px;
    background: #7a8290;
  }
`

const EditorBody = styled.div`
  flex: 1;
  display: flex;
  flex-direction: column;
  padding-bottom: 2px;
`

const EditorHead = styled.div`
  height: 21px;
  display: flex;
  align-items: center;
  justify-content: flex-end;
  gap: 1px;
`

const EditorTools = styled.div`
  height: 18px;
  display: flex;
  align-items: center;
  background: #f0f0f0;
  border-bottom: 1px solid #8f8f8f;
  color: #222;
  font: 7px/10px 'DejaVu Sans Condensed', 'DejaVu Sans', sans-serif;
`

const ToolGroup = styled.div`
  display: flex;
  margin-right: 4px;
`

const StepInput = styled.input`
  width: 44px;
  height: 12px;
  margin-right: 2px;
  padding-left: 3px;
  border: 1px solid #999;
  color: #777;
`

const SurfaceSelect = styled.label`
  display: flex;
  align-items: center;
  gap: 12px;
  margin-left: 20px;

  span {
    display: flex;
    align-items: center;
    width: 120px;
    height: 12px;
    padding: 0 4px 0 14px;
    background: #fff;
    border: 1px solid #888;
    border-bottom: 0;
    margin-top: 3px;
  }

  select {
    flex: 1;
  }
`

const SurfaceButton = styled(IconButton)`
  margin-left: 4px;
  height: 13px;
  background: #d9e2dc;
  border: 1px solid #aab;
`

const EditorTable = styled.div`
  flex: 1;
  background: #fff;
  color: #222;
  font: 7px/9px 'DejaVu Sans Condensed', 'DejaVu Sans', sans-serif;

  table {
    width: 305px;
    height: 95px;
    table-layout: fixed;
  }

  th {
    height: 20px;
    padding: 0 2px;
    font-weight: 400;
    text-align: left;
  }

  td {
    padding: 0;
    text-align: center;
    border-right: 1px solid #222;
    border-bottom: 1px solid #222;
  }

  td:first-child svg {
    margin: auto;
  }

  tr:nth-child(2) td:nth-child(n + 2) {
    background: #efefef;
  }
`

const Soft = styled.span`
  color: ${p => (p.$strong ? '#111' : '#888')};
`

const EditorSide = styled.div`
  width: 16px;
  padding: 15px 1px 0 0;
`

/* ---------- properties ---------- */

const SelectionRow = styled.div`
  display: flex;
  align-items: center;
  margin: 7px 4px 4px 3px;
  padding-right: 1px;
`

const SelectionSelect = styled.label`
  flex: 1;
  display: flex;
  align-items: center;
  height: 16px;
  padding: 0 3px 0 2px;
  margin-right: 2px;
  background: #4b5568;

  select {
    flex: 1;
  }
`

const PropTable = styled.table`
  width: 242px;
  height: 365px;
  margin-left: 7px;
  table-layout: fixed;

  th {
    height: 13px;
    padding: 0 4px;
    background: #2d3441;
    border: solid ${panel};
    border-width: 1px 0;
    text-align: left;
    color: #f0f1f4;
    line-height: 11px;
  }

  th i {
    float: right;
    margin-top: 4px;
  }

  td {
    padding: 0 4px;
    line-height: 10px;
    border: 1px solid #353c4c;
    white-space: nowrap;
  }

  td:first-child {
    border-width: 0 1px 0 0;
  }

  td:last-child {
    padding-left: 2px;
    color: #e2e4e9;
  }
`

const Swatch = styled.i`
  display: inline-block;
  width: 9px;
  height: 9px;
  margin-right: 4px;
  background: #fff;
  vertical-align: middle;
`

const Stroke = styled.i`
  display: inline-block;
  width: 44px;
  height: 1px;
  margin-right: 3px;
  background: #d8dbe1;
  vertical-align: middle;
`

const Dim = styled.span`
  color: #8d94a2;
`

/* ---------- status bar and taskbar ---------- */

const StatusBar = styled.footer`
  height: 17px;
  display: flex;
  align-items: center;
  gap: 2px;
  padding: 0 2px;
  white-space: nowrap;
`

const Segment = styled.div`
  display: flex;
  align-items: center;
  justify-content: ${p => (p.$grow ? 'flex-start' : 'center')};
  flex: ${p => (p.$grow ? '1' : 'none')};
  width: ${p => (p.$w ? p.$w + 'px' : 'auto')};
  height: 16px;
  background: ${panel};
  color: #eceef1;
`

const ScaleText = styled.span`
  padding: 0 2px 0 4px;
`

const StatusButton = styled.button`
  display: flex;
  align-items: center;
  justify-content: center;
  width: ${p => (p.$caret ? 12 : 16)}px;
  height: 15px;
  border: solid ${panel};
  border-width: 0 1px;
  background: ${p => (p.$on ? '#5b93cb' : 'none')};
`

const Taskbar = styled.footer`
  height: 27px;
  display: flex;
  align-items: stretch;
  background: #1c1c1d;
  color: #f1f1f1;
  white-space: nowrap;
`

const StartButton = styled.button`
  width: 32px;
  display: flex;
  align-items: center;
  justify-content: center;
`

const TaskSearch = styled.label`
  width: 192px;
  display: flex;
  align-items: center;
  margin-top: 1px;
  padding: 2px 2px 1px 7px;
  background: #f2f2f2;

  input {
    flex: 1;
    min-width: 0;
    padding-left: 7px;
    font-size: 10px;
  }

  input::placeholder {
    color: #444;
    opacity: 1;
  }
`

const Highlight = styled.span`
  display: flex;
  align-items: center;
  justify-content: center;
  width: 47px;
  height: 100%;
  border-radius: 4px;
  background: #dfe1e2;
`

const TaskDivider = styled.i`
  width: 3px;
  height: 11px;
  margin: auto 8px auto 4px;
  border: solid #555;
  border-width: 0 1px;
`

const TaskApp = styled.button`
  width: 33px;
  display: flex;
  align-items: center;
  justify-content: center;
  background: linear-gradient(#8cc0ec, #8cc0ec) 50% 100% / ${p => (p.$running ? 27 : 0)}px 2px no-repeat,
    ${p => (p.$active ? '#474748' : 'transparent')};
`

const CivilMark = styled.span`
  width: 15px;
  height: 17px;
  padding-top: 1px;
  background: #b0147c;
  color: #fff;
  text-align: center;
  font-size: 9px;
  font-weight: 900;
  line-height: 9px;

  small {
    display: block;
    font-size: 4px;
    line-height: 5px;
  }
`

const Tray = styled.div`
  display: flex;
  align-items: center;
  margin-left: auto;

  b {
    font-weight: 400;
    font-size: 9px;
  }

  b.name {
    margin-left: 4px;
  }

  b.fall {
    color: #ee5549;
    margin: 0 12px 0 6px;
  }
`

const Chevrons = styled.span`
  align-self: flex-start;
  width: 62px;
  margin-left: 5px;
  font-size: 11px;
`

const Clock = styled.div`
  width: 42px;
  text-align: center;
  line-height: 12px;
`

const Notify = styled.button`
  position: relative;
  width: 36px;
  display: flex;
  justify-content: center;

  span {
    position: absolute;
    left: 17px;
    top: 4px;
    width: 11px;
    height: 11px;
    border-radius: 50%;
    background: #55585c;
    font-size: 7px;
    line-height: 11px;
  }
`

/* ---------- data ---------- */

const menus = [
  ['File'], ['Edit'], ['View'], ['Insert'], ['General', 1], ['Survey', 1], ['Points', 1], ['Surfaces', 1],
  ['Lines/Curves', 1], ['Parcels', 1], ['Grading'], ['Alignments'], ['Profiles'], ['Corridors'], ['Sections'],
  ['Pipes', 1], ['Annotation', 1], ['Inquiry', 1], ['Window'], ['Express', 1], ['Vehicle Tracking'],
]

const ribbonTabs = [
  'Home', 'Insert', 'Annotate', 'Modify', 'Analyze', 'View', 'Manage', 'Output', 'Survey', 'Rail', 'Transparent',
  'InfraWorks', 'Collaborate', 'Help', 'Add-ins', 'Featured Apps', 'Express Tools', 'Raster Tools',
  'Standardized Data Tool', 'Vehicle Tracking', 'Tool Palattes',
]

const featureMenu = [
  ['bigFeature', 'Create Feature Line'],
  ['bigObjects', 'Create Feature Lines from Objects'],
  ['bigAlign', 'Create Feature Lines from Alignment'],
  ['bigCorridor', 'Create Feature Line from Corridor'],
  ['bigStepped', 'Create Feature Line from Stepped Offset'],
]

// level, expander, icon, label
const tree = [
  [0, 'open', 'page', 'Drawing1'],
  [1, '', 'tPoint', 'Points'],
  [1, 'closed', 'tGroup', 'Point Groups'],
  [1, '', 'tSurface', 'Surfaces'],
  [1, 'closed', 'tAlign', 'Alignments'],
  [1, '', 'tFeature', 'Feature Lines'],
  [1, 'open', 'tSite', 'Sites'],
  [2, 'open', 'tSite', 'Site'],
  [3, 'closed', 'tAlign', 'Alignments'],
  [3, 'closed', 'tFeature', 'Feature Lines', true],
  [3, '', 'tGrading', 'Grading Groups'],
  [3, '', 'tParcel', 'Parcels'],
  [1, 'closed', 'tTurnout', 'Turnouts and Crossovers'],
  [1, '', 'tCatch', 'Catchments'],
  [1, 'closed', 'tPipe', 'Pipe Networks'],
  [1, '', 'tPressure', 'Pressure Networks'],
  [1, '', 'tBridge', 'Bridges'],
]

const items = ['680.', '628.', '986.', '937.', '886.', '878.', '703.', '986.']
const blanks = ['#feffe6', '#d2ffd2', '#d2ffd2', '#d2ffd2', '#feffe6', '#feffe6']

const stations = [
  ['0+00.00', "100.000'", "242.895'", '', '10.00%'],
  ['2+42.90', "124.290'", "74.038'", '-10.00%', '10.00%'],
  ['3+16.93', "131.693'", "10.873'", '-10.00%', '10.00%'],
  ['3+27.81', "132.781'", "82.088'", '-10.00%', '10.00%'],
  ['4+09.89', "140.989'", "118.922'", '-10.00%', '10.00%'],
  ['5+28.82', "152.882'", "151.375'", '-10.00%', '10.00%'],
  ['6+80.19', "168.019'", '', '-10.00%', ''],
]

const properties = [
  ['General', [
    ['Color', <><Swatch />ByLayer</>],
    ['Layer', '0'],
    ['Linetype', <><Stroke />ByLayer</>],
    ['Linetype scale', '1.00'],
    ['Lineweight', <><Stroke />ByLayer</>],
    ['Transparency', 'ByLayer'],
    ['Thickness', '0.00'],
  ]],
  ['3D Visualization', [['Material', 'ByLayer']]],
  ['Plot style', [
    ['Plot style', <Dim>ByColor</Dim>],
    ['Plot style table', 'acad.ctb'],
    ['Plot table attached to', <Dim>Model</Dim>],
    ['Plot table type', <Dim>Color dependent</Dim>],
  ]],
  ['View', [
    ['Center X', <Dim>942473.33</Dim>],
    ['Center Y', <Dim>608402.87</Dim>],
    ['Center Z', <Dim>0.00</Dim>],
    ['Height', <Dim>1031.05</Dim>],
    ['Width', <Dim>762.05</Dim>],
  ]],
  ['Misc', [
    ['Annotation scale', '1" = 50\''],
    ['UCS icon On', 'Yes'],
    ['UCS icon at origin', 'Yes'],
    ['UCS per viewport', 'Yes'],
    ['UCS Name', ''],
    ['Visual Style', '2D Wireframe'],
  ]],
]

const strip = [
  'v1', 'v2', 'v3', 'v4', 'v5', 'v6', 'v7', 'v8', 'v9', 'v10', 'v11', 'v12', 'v13', '-', 'v14', '-',
  'v15', 'v16', 'v17', '-', 'v18', 'v19', 'v20', 'v21', 'v22', 'v23',
]

/* ---------- components ---------- */

function Tool({ icon, label, menu, open, size = 12 }) {
  return (
    <RibbonButton $open={open} aria-label={label || icon}>
      <Icon n={icon} s={size} />
      {label}
      {menu && <Caret />}
    </RibbonButton>
  )
}

function ToolColumn({ w, tools }) {
  return (
    <Column $w={w}>
      {tools.map(([icon, label, menu]) => <Tool key={icon} icon={icon} label={label} menu={menu} />)}
    </Column>
  )
}

function LayerIcons() {
  return (
    <>
      <Icon n="bulb" s={11} />
      <Icon n="sun" s={11} />
      <Icon n="lock" s={11} />
      <Icon n="square" s={10} />
    </>
  )
}

function TopBar() {
  return (
    <TitleBar>
      <Logo>C<small>C3D</small></Logo>
      {['newFile', 'open', 'save', 'saveAs', 'mobile', 'print', 'undo'].map(n => (
        <IconButton key={n} aria-label={n}><Icon n={n} /></IconButton>
      ))}
      <Row $gap={5}>
        <Caret />
        <Icon n="redo" />
        <Caret $color="#8a919e" />
      </Row>
      <Row $gap={3}>
        <i />
        <Combo $w={118}>
          <Icon n="gear" s={10} />
          <select aria-label="Workspace"><option>Civil 3D</option></select>
          <Caret $big />
        </Combo>
        <Combo $w={138}>
          <LayerIcons />
          <select aria-label="Current layer"><option>0</option></select>
          <Caret />
        </Combo>
        <Caret $big />
      </Row>
      <Share href="#share"><Icon n="send" s={11} />Share</Share>
      <Title>{'Autodesk Civil 3D 2023    Drawing1.dwg'}</Title>
      <Icon n="play" s={9} />
      <SearchBox aria-label="Search" placeholder="Type a keyword or phrase" />
      <IconButton aria-label="Search"><Icon n="search" s={10} /></IconButton>
      <Row $gap={3}>
        <i />
        <Icon n="user" />
        jadamsLVHTT
      </Row>
      <Row $gap={8}>
        <i />
        <Caret />
        <Icon n="cart" s={10} />
      </Row>
      <Row $gap={5}>
        <i />
        <Icon n="adsk" s={11} />
        <Caret />
        <Separator />
        <Icon n="help" />
        <Caret />
      </Row>
      <WindowButtons>
        <Icon n="min" s={8} />
        <Icon n="restore" s={9} />
        <Icon n="close" s={9} />
      </WindowButtons>
    </TitleBar>
  )
}

function RibbonArea() {
  return (
    <Ribbon>
      <RibbonPanel $w={76}>
        <PanelBody $pad={2}>
          <BigButton $w={40} $on><Icon n="tools" s={24} />Toolspace</BigButton>
          <PaletteGrid>
            {['chartPal', 'gearPal', 'tripod', 'toolbox', 'note', 'calc'].map(n => (
              <PaletteButton key={n} $on={n !== 'note'} aria-label={n}><Icon n={n} /></PaletteButton>
            ))}
          </PaletteGrid>
        </PanelBody>
        <PanelTitle>Palettes <Caret $big /></PanelTitle>
      </RibbonPanel>
      <RibbonPanel $w={36}>
        <PanelBody><BigButton $w={35}><Icon n="projectExplorer" s={22} />Project Explorer</BigButton></PanelBody>
        <PanelTitle>Explore</PanelTitle>
      </RibbonPanel>
      <RibbonPanel $w={54}>
        <PanelBody><BigButton $w={53}><Icon n="optimization" s={22} />Grading Optimization</BigButton></PanelBody>
        <PanelTitle>Optimize</PanelTitle>
      </RibbonPanel>
      <RibbonPanel $w={85}>
        <PanelBody $pad={14}>
          <ToolColumn w={60} tools={[['points', 'Points', 1], ['surfaces', 'Surfaces', 1], ['traverse', 'Traverse', 1]]} />
        </PanelBody>
        <PanelTitle>Create Ground Data <Caret $big /></PanelTitle>
      </RibbonPanel>
      <RibbonPanel $w={215}>
        <PanelBody $pad={3}>
          <Column $w={70}>
            <Tool icon="parcel" label="Parcel" menu />
            <MenuAnchor>
              <Tool icon="featureLine" label="Feature Line" menu open />
              <DropMenu>
                {featureMenu.map(([icon, label]) => (
                  <li key={label}><button><Icon n={icon} s={20} />{label}</button></li>
                ))}
              </DropMenu>
            </MenuAnchor>
          </Column>
          <ToolColumn w={65} tools={[['alignment', 'Alignment', 1], ['profile', 'Profile', 1]]} />
          <ToolColumn w={70} tools={[['intersections', 'Intersections', 1], ['assembly', 'Assembly', 1], ['pipe', 'Pipe Network', 1]]} />
        </PanelBody>
        <PanelTitle>Create Design <Caret $big /></PanelTitle>
      </RibbonPanel>
      <RibbonPanel $w={89}>
        <PanelBody $pad={6}>
          <ToolColumn w={76} tools={[['profileView', 'Profile View', 1], ['sampleLines', 'Sample Lines'], ['sectionViews', 'Section Views', 1]]} />
        </PanelBody>
        <PanelTitle>Profile &amp; Section Views</PanelTitle>
      </RibbonPanel>
      <RibbonPanel $w={78}>
        <PanelBody $pad={1}>
          <ToolColumn w={25} tools={[['line', '', 1], ['divide', '', 1], ['spline', '', 1]]} />
          <ToolColumn w={26} tools={[['arc', '', 1], ['circle', '', 1], ['ellipse', '', 1]]} />
          <ToolColumn w={25} tools={[['pline'], ['rect', '', 1], ['hatch', '', 1]]} />
        </PanelBody>
        <PanelTitle>Draw <Caret $big /></PanelTitle>
      </RibbonPanel>
      <RibbonPanel $w={167}>
        <PanelBody $pad={2}>
          <ToolColumn w={48} tools={[['move', 'Move'], ['copy', 'Copy'], ['stretch', 'Stretch']]} />
          <ToolColumn w={46} tools={[['rotate', 'Rotate'], ['mirror', 'Mirror'], ['scale', 'Scale']]} />
          <ToolColumn w={51} tools={[['trim', 'Trim', 1], ['fillet', 'Fillet', 1], ['array', 'Array', 1]]} />
          <ToolColumn w={16} tools={[['erase'], ['explode'], ['offset']]} />
        </PanelBody>
        <PanelTitle>Modify <Caret $big /></PanelTitle>
      </RibbonPanel>
      <RibbonPanel $w={182}>
        <PanelBody $pad={1}>
          <BigButton $w={40}><Icon n="layerProps" s={22} />Layer Properties</BigButton>
          <Column $w={139}>
            <Combo $w={137} $bg="#4b5568">
              <LayerIcons />
              <select aria-label="Layer"><option>0</option></select>
              <Caret $big />
            </Combo>
            <LayerRow>
              {['layOff', 'layIso', 'layFrz', 'layLock'].map(n => <Tool key={n} icon={n} />)}
              <Tool icon="makeCurrent" label="Make Current" />
            </LayerRow>
            <LayerRow>
              {['layOn', 'layUniso', 'layThaw', 'layUnlock'].map(n => <Tool key={n} icon={n} />)}
              <Tool icon="matchLayer" label="Match Layer" />
            </LayerRow>
          </Column>
        </PanelBody>
        <PanelTitle>Layers <Caret $big /></PanelTitle>
      </RibbonPanel>
      <RibbonPanel $last>
        <PanelBody $pad={1}>
          <BigButton $w={34}><Icon n="paste" s={22} />Paste<Caret /></BigButton>
          <ToolColumn w={18} tools={[['cut'], ['copyClip'], ['matchProp']]} />
        </PanelBody>
        <PanelTitle $w={54}>Clipboard</PanelTitle>
      </RibbonPanel>
    </Ribbon>
  )
}

function TreeView() {
  return (
    <WhiteBox $top={1}>
      <TreeWrap>
        <Tree>
          {tree.map(([level, exp, icon, label, selected], i) => (
            <TreeRow key={i}>
              {Array.from({ length: level }, (_, c) => <TreeCell key={c} $line={c !== 2} />)}
              <TreeCell $line={level % 2 === 1} $tick>{exp && <Expander $open={exp === 'open'} />}</TreeCell>
              <TreeCell><Icon n={icon} /></TreeCell>
              <TreeLabel $bold={level === 0} $selected={selected}>{label}</TreeLabel>
            </TreeRow>
          ))}
        </Tree>
        <VScroll><Chevron $deg={225} /><Chevron /></VScroll>
      </TreeWrap>
      <HScroll $thumb={62}><Chevron $deg={135} /><Chevron $deg={-45} /></HScroll>
    </WhiteBox>
  )
}

function ToolspacePanel() {
  return (
    <Toolspace>
      <SideBody>
        <SideTitle>TOOLSPACE</SideTitle>
        <ToolspaceTools>
          <LightButton $on aria-label="Active view"><Icon n="cubeGreen" /></LightButton>
          <Spacer />
          <LightButton aria-label="Panorama"><Icon n="panorama" /></LightButton>
          <LightButton $on aria-label="Preview"><Icon n="previewOn" /></LightButton>
          <LightButton aria-label="Help"><Icon n="help" /></LightButton>
        </ToolspaceTools>
        <ViewSelect>
          <select aria-label="View"><option>Active Drawing View</option></select>
          <Chevron />
        </ViewSelect>
        <TreeView />
        <WhiteBox $top={7}>
          <ItemTable>
            <colgroup><col width="66" /><col width="46" /><col width="47" /><col /></colgroup>
            <thead><tr><th>Name</th><th>Style</th><th>Layer</th><th>2D Le</th></tr></thead>
            <tbody>
              {items.map((len, i) => (
                <ItemRow key={i}>
                  <td>
                    <NameCell><FeatureIcon><Icon n="tFeature" s={9} /></FeatureIcon>{i === 0 && 'Feature 4'}</NameCell>
                  </td>
                  <td>{i === 0 ? '_First ORder' : '_Second OR'}</td>
                  <td>C-TOPO-FE</td>
                  <td>{len}</td>
                </ItemRow>
              ))}
              {blanks.map((bg, i) => <ItemRow key={i} $bg={bg}><td /><td /><td /><td /></ItemRow>)}
            </tbody>
          </ItemTable>
          <HScroll $thumb={58}><Chevron $deg={135} /><Chevron $deg={-45} /></HScroll>
        </WhiteBox>
      </SideBody>
      <SideTabs>
        <SideTab $active><span>Prospector</span></SideTab>
        <SideTab><span>Settings</span></SideTab>
        <SideTab><span>Survey</span></SideTab>
        <SideTab><span>Toolbox</span></SideTab>
      </SideTabs>
      <Gutter />
    </Toolspace>
  )
}

function Drawings() {
  return (
    <DrawArea>
      <Viewport $active>
        <svg viewBox="208 133 384 357" preserveAspectRatio="xMinYMin" fill="none">
          <path d="M234 172.500H451M234 224.500H477M234 265.500H538M234 294.500H541M234 298.500H557M234 324.500H575M234 408.500H575" stroke="#000096" />
          <path d="M233.500 172V408" stroke="#1c7a1c" />
          <path d="M451 173l26 52 61 41 3 29 17 3 17 26v84" stroke="#d0d0d0" />
          <path d="M233.500 319.500l-4 7h8z" stroke="#7c8f7c" />
          <path d="M217.500 477V447M221 480.500h30M214.500 477.500h6v6h-6z" stroke="#bdbdbd" />
          <path d="M218 436l4 4.500v4.500M226 436l-4 4.500M253 472l9 8M262 472l-9 8" stroke="#bdbdbd" />
        </svg>
      </Viewport>
      <ViewDivider />
      <Viewport>
        <svg viewBox="596 133 384 357" preserveAspectRatio="xMinYMin" fill="none">
          <path d="M596 282.500L710 245M596 313L766 257.500M612 331.500L840 257.500M631 342L862 267M634 343.500L877 264.500M652 352.500L908 269.500M596 323.500L710 383L967 299.500" stroke="#128212" />
          <path d="M710 301l56 7.500 74-4 22 7 16-3.500 30 3 59 22" stroke="#d0d0d0" />
          <path d="M647 392.500l10 1.500-7 2z" stroke="#8a8a8a" strokeWidth=".8" />
        </svg>
      </Viewport>
      <ViewLabel>[+][Top][2D Wireframe]</ViewLabel>
      <Cursor viewBox="0 0 9 14"><path d="M1 0v11l3-2 2 4 2-1-2-4h3z" fill="#fff" /></Cursor>
      <CommandBar>
        <CommandTools>
          <GripV />
          <Icon n="closeThin" s={8} />
          <Icon n="wrench" s={11} />
        </CommandTools>
        <CommandInput>
          <Icon n="cmd" s={11} />
          <Caret $color="#444" />
          <input aria-label="Command" placeholder="Type a command" />
          <CaretUp />
        </CommandInput>
      </CommandBar>
    </DrawArea>
  )
}

function ElevationEditor() {
  const group = names => (
    <ToolGroup>
      {names.map(n => <IconButton key={n} aria-label={n}><Icon n={n} /></IconButton>)}
    </ToolGroup>
  )

  return (
    <Editor>
      <EditorGrip><i /></EditorGrip>
      <EditorBody>
        <EditorHead>
          <IconButton aria-label="Apply"><Icon n="check" s={11} /></IconButton>
          <IconButton aria-label="Help"><Icon n="help" s={11} /></IconButton>
        </EditorHead>
        <EditorTools>
          {group(['eSelect'])}
          {group(['eZoom', 'eQuick'])}
          {group(['eRaise', 'eUp', 'eDown', 'eSet'])}
          <StepInput aria-label="Increment" defaultValue="1.000'" />
          {group(['eFlat', 'eIns', 'eDel', 'eGray', 'eCopy'])}
          {group(['eCols'])}
          {group(['eRows'])}
          <SurfaceSelect>
            Relative to surface:
            <span>
              <select><option>&lt;none&gt;</option></select>
              <Chevron $color="#777" />
            </span>
          </SurfaceSelect>
          <SurfaceButton aria-label="Pick surface"><Icon n="eSelect" s={11} /></SurfaceButton>
        </EditorTools>
        <EditorTable>
          <table>
            <colgroup><col width="17" /><col width="43" /><col width="78" /><col width="43" /><col width="60" /><col width="64" /></colgroup>
            <thead>
              <tr><th /><th>Station</th><th>Elevation(Actual)</th><th>Length</th><th>Grade Back</th><th>Grade Ahead</th></tr>
            </thead>
            <tbody>
              {stations.map(([station, elevation, length, back, ahead], i) => {
                const end = i === 0 || i === stations.length - 1
                return (
                  <tr key={station}>
                    <td><Icon n={end ? 'triOn' : 'triOff'} s={9} /></td>
                    <td>{station}</td>
                    <td><Soft $strong={end}>{elevation}</Soft></td>
                    <td><Soft>{length}</Soft></td>
                    <td>{back}</td>
                    <td>{ahead}</td>
                  </tr>
                )
              })}
            </tbody>
          </table>
        </EditorTable>
      </EditorBody>
      <EditorSide>
        <SideTab $active><span>Grading Elevation E...</span></SideTab>
      </EditorSide>
    </Editor>
  )
}

function PropertiesPanel() {
  return (
    <Properties>
      <SideTabs>
        <SideTab $active><span>Design</span></SideTab>
        <SideTab><span>Display</span></SideTab>
        <SideTab><span>Extended Data</span></SideTab>
        <SideTab><span>Object Class</span></SideTab>
      </SideTabs>
      <SideBody>
        <SideTitle>PROPERTIES</SideTitle>
        <SelectionRow>
          <SelectionSelect>
            <select aria-label="Selection"><option>No selection</option></select>
            <Caret $big />
          </SelectionSelect>
          {['addSel', 'quickSel', 'selObj'].map(n => <IconButton key={n} aria-label={n}><Icon n={n} s={11} /></IconButton>)}
        </SelectionRow>
        <PropTable>
          <colgroup><col width="12" /><col width="107" /><col /></colgroup>
          {properties.map(([title, rows]) => (
            <tbody key={title}>
              <tr><th colSpan="3">{title}<Caret $big /></th></tr>
              {rows.map(([name, value]) => <tr key={name}><td /><td>{name}</td><td>{value}</td></tr>)}
            </tbody>
          ))}
        </PropTable>
      </SideBody>
    </Properties>
  )
}

// '>' marks a drop-down arrow, '*' a tool that is switched on
function StatusTools({ names }) {
  return names.map((name, i) => {
    if (name === '>') return <StatusButton key={i} $caret aria-label="More"><Caret $big /></StatusButton>
    const on = name[0] === '*'
    const n = on ? name.slice(1) : name
    return <StatusButton key={i} $on={on} aria-label={n}><Icon n={n} /></StatusButton>
  })
}

function Status() {
  return (
    <StatusBar>
      <Segment $grow />
      <Segment $w={78}>PROFILE: C3D_USER</Segment>
      <Segment $w={120}>942354.17, 608917.43, 0.00</Segment>
      <Segment $w={31}>MODEL</Segment>
      <Segment><StatusTools names={['sGrid', 'sDots', '>']} /></Segment>
      <Segment>
        <StatusTools names={[
          '*sInfer', 'sOrtho', 'sPolar', '>', 'sIso', '>', 'sAngle', '*sSnap', '>', '*sLwt', '*sTransp', '*sCycle',
          's3d', '>', '*sUcs', '>',
        ]} />
      </Segment>
      <Segment>
        <StatusTools names={['*sAnno', '*sAnno2', 'sAnno3']} />
        <ScaleText>1" = 50'</ScaleText>
        <StatusTools names={['>']} />
      </Segment>
      <Segment><StatusTools names={['gear', '>', 'plus']} /></Segment>
      <Segment $w={41}><StatusTools names={['sStack']} />3.50</Segment>
      <Segment><StatusTools names={['sTagSel', '>', '*sTag', 'sShapes']} /></Segment>
      <Segment><StatusTools names={['*sClean']} /></Segment>
      <Segment><StatusTools names={['sGraph']} /></Segment>
      <Segment><StatusTools names={['sFull', 'burger']} /></Segment>
    </StatusBar>
  )
}

function WindowsBar() {
  return (
    <Taskbar>
      <StartButton aria-label="Start"><Icon n="start" /></StartButton>
      <TaskSearch>
        <Icon n="searchWin" />
        <input placeholder="Type here to search" aria-label="Search Windows" />
        <Highlight><Icon n="briefcase" s={19} /></Highlight>
      </TaskSearch>
      <TaskDivider />
      <TaskApp $running aria-label="Files"><Icon n="folder" s={16} /></TaskApp>
      <TaskApp aria-label="Firefox"><Icon n="firefox" s={16} /></TaskApp>
      <TaskApp $running aria-label="Teams"><Icon n="teams" s={17} /></TaskApp>
      <TaskApp $running aria-label="Outlook"><Icon n="outlook" s={17} /></TaskApp>
      <TaskApp $running aria-label="Browser"><Icon n="eApp" s={16} /></TaskApp>
      <TaskApp $running $active aria-label="Civil 3D"><CivilMark>C<small>C3D</small></CivilMark></TaskApp>
      <TaskApp $running aria-label="Camtasia"><Icon n="camG" s={16} /></TaskApp>
      <TaskApp $running aria-label="Recorder"><Icon n="camR" s={16} /></TaskApp>
      <Tray>
        <TaskDivider />
        <b>Desktop</b>
        <Chevrons>»</Chevrons>
        <Icon n="vix" s={16} />
        <b className="name">VIX</b>
        <b className="fall">-3.00%</b>
        {['up', 'cloud', 'mic', 'cam', 'battery', 'wifi', 'sound'].map(n => (
          <IconButton key={n} aria-label={n}><Icon n={n} s={n === 'up' ? 9 : 11} /></IconButton>
        ))}
        <Clock>10:20 AM<br />4/4/2024</Clock>
        <Notify aria-label="Notifications"><Icon n="notify" /><span>21</span></Notify>
      </Tray>
    </Taskbar>
  )
}

function App() {
  return (
    <Page>
      <GlobalStyle />
      <TopBar />
      <MenuBar>
        {menus.map(([name, tight]) => <a key={name} href="#menu" className={tight ? 'tight' : ''}>{name}</a>)}
        <MdiButtons>
          <Icon n="min" s={8} />
          <Icon n="restore" s={9} />
          <Icon n="close" s={9} />
        </MdiButtons>
      </MenuBar>
      <RibbonTabs>
        {ribbonTabs.map(name => <RibbonTab key={name} href="#tab" $active={name === 'Home'}>{name}</RibbonTab>)}
        <RibbonToggle aria-label="Minimize ribbon"><Icon n="ribbonToggle" s={11} /><Caret /></RibbonToggle>
      </RibbonTabs>
      <RibbonArea />
      <Tabs $h={19}>
        <Slash />
        <a href="#start">Start</a>
        <Slash />
        <a href="#required">P_REQUIRED*</a>
        <SlantTab href="#drawing1" $h={19}>Drawing1* <Icon n="closeThin" s={7} /></SlantTab>
        <Icon n="plus" s={9} />
        <Slash />
      </Tabs>
      <Workspace>
        <ToolspacePanel />
        <Center>
          <DrawRow>
            <Drawings />
            <ToolStrip>
              <Grip />
              {strip.map((n, i) => n === '-' ? <hr key={i} /> : <button key={i} aria-label={n}><Icon n={n} /></button>)}
            </ToolStrip>
          </DrawRow>
          <ElevationEditor />
        </Center>
        <PropertiesPanel />
      </Workspace>
      <Tabs $h={21} $below={4}>
        <SlantTab href="#model" $h={17}>Model</SlantTab>
        <a href="#layout1">Layout1</a>
        <Slash />
        <Icon n="plus" s={9} />
        <Slash />
      </Tabs>
      <Status />
      <WindowsBar />
    </Page>
  )
}

export default App
